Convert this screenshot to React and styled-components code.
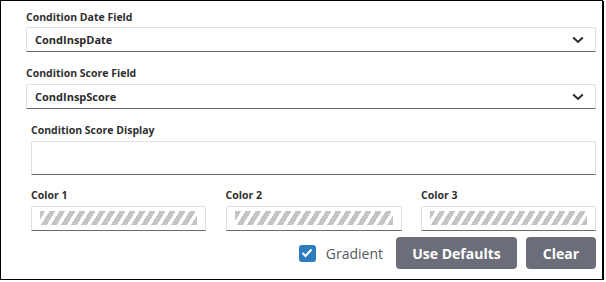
import React, { useState } from 'react'
import styled, { createGlobalStyle } from 'styled-components'

const GlobalStyle = createGlobalStyle`
  html, body {
    margin: 0;
    padding: 0;
    background: #fff;
  }
  body {
    font-family: "Open Sans", "Liberation Sans", sans-serif;
  }
`;

const Panel = styled.div`
  box-sizing: border-box;
  width: 603px;
  height: 280px;
  border: 1px solid #000;
  box-shadow: 1px 1px 0 #000;
  padding: 9px 6px 0 25px;
  display: flex;
  flex-direction: column;
`;

const Field = styled.div`
  display: flex;
  flex-direction: column;
  padding-left: ${p => p.indent || 0}px;
  margin-bottom: ${p => p.gap || 0}px;
`;

const Label = styled.label`
  font-size: 10.5px;
  font-weight: 700;
  color: #2f2f2f;
  line-height: 15px;
  margin-bottom: ${p => p.gap || 3}px;
`;

const Select = styled.div`
  box-sizing: border-box;
  height: 25px;
  border: 1px solid #e0e0e0;
  border-bottom: 1px solid #6a6a6a;
  border-radius: 2px 2px 0 0;
  display: flex;
  align-items: center;
  justify-content: space-between;
  padding: 0 11px 0 8px;
  font-size: 11px;
  font-weight: 700;
  color: #2a2a2a;
`;

const TextBox = styled.div`
  box-sizing: border-box;
  height: 34px;
  border: 1px solid #e0e0e0;
  border-bottom: 1px solid #6a6a6a;
  border-radius: 2px 2px 0 0;
`;

const ColorRow = styled.div`
  display: grid;
  grid-template-columns: 175px 176px 175px;
  justify-content: space-between;
  padding-left: 5px;
`;

const Swatch = styled.div`
  box-sizing: border-box;
  height: 25px;
  border: 1px solid #e0e0e0;
  border-bottom: 1px solid #6a6a6a;
  border-radius: 2px 2px 0 0;
  padding: 4px 8px 5px 8px;
`;

const Stripes = styled.div`
  height: 100%;
  background: repeating-linear-gradient(
    -58deg,
    #c4c4c4 0 5px,
    #ffffff 5px 8.5px
  );
`;

const Footer = styled.div`
  display: flex;
  justify-content: flex-end;
  align-items: center;
  margin-top: 6px;
  gap: 9px;
`;

const Check = styled.label`
  display: flex;
  align-items: center;
  gap: 10px;
  font-size: 14px;
  color: #555a60;
  margin-right: 4px;
  cursor: pointer;
`;

const Box = styled.span`
  width: 17px;
  height: 17px;
  border-radius: 3px;
  background: ${p => (p.on ? '#2d7cc0' : '#fff')};
  border: ${p => (p.on ? 'none' : '1px solid #888')};
  display: flex;
  align-items: center;
  justify-content: center;
`;

const Button = styled.button`
  height: 32px;
  padding: 0 16px;
  border: none;
  border-radius: 4px;
  background: #6b6e78;
  color: #fff;
  font-family: "Open Sans", "Liberation Sans", sans-serif;
  font-size: 14px;
  font-weight: 700;
  cursor: pointer;
  width: ${p => p.w}px;
`;

const Chevron = () => (
  <svg width="12" height="8" viewBox="0 0 12 8">
    <path d="M1.2 1.5 L6 6 L10.8 1.5" fill="none" stroke="#2a2a2a" strokeWidth="2" />
  </svg>
);

const App = () => {
  const [gradient, setGradient] = useState(true);

  return (
    <>
      <GlobalStyle />
      <Panel>
        <Field gap={14}>
          <Label gap={2}>Condition Date Field</Label>
          <Select>
            CondInspDate
            <Chevron />
          </Select>
        </Field>
        <Field gap={14}>
          <Label>Condition Score Field</Label>
          <Select>
            CondInspScore
            <Chevron />
          </Select>
        </Field>
        <Field indent={5} gap={13}>
          <Label>Condition Score Display</Label>
          <TextBox />
        </Field>
        <ColorRow>
          {['Color 1', 'Color 2', 'Color 3'].map(c => (
            <Field key={c}>
              <Label>{c}</Label>
              <Swatch>
                <Stripes />
              </Swatch>
            </Field>
          ))}
        </ColorRow>
        <Footer>
          <Check onClick={() => setGradient(!gradient)}>
            <Box on={gradient}>
              {gradient && (
                <svg width="12" height="10" viewBox="0 0 12 10">
                  <path d="M1.5 5 L4.5 8 L10.5 1.5" fill="none" stroke="#fff" strokeWidth="2" />
                </svg>
              )}
            </Box>
            Gradient
          </Check>
          <Button w={121}>Use Defaults</Button>
          <Button w={70}>Clear</Button>
        </Footer>
      </Panel>
    </>
  )
}

export default App
